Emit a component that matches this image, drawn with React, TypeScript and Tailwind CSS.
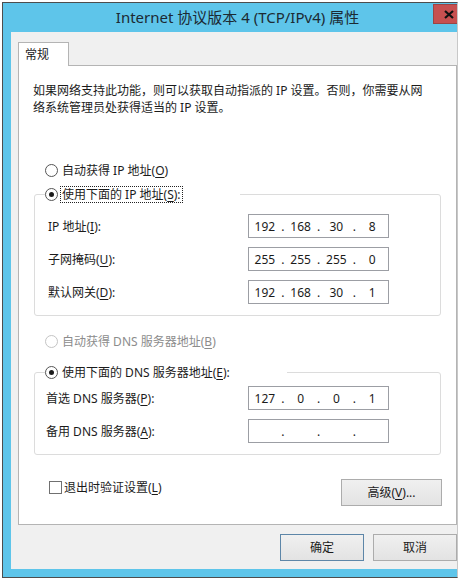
import type { ReactNode } from 'react'

const FONT = "font-['Noto_Sans','Noto_Sans_CJK_SC',sans-serif]"

function Key({ k }: { k: string }) {
  return <span className="underline underline-offset-[2px]">{k}</span>
}

function Radio({ checked, disabled }: { checked?: boolean; disabled?: boolean }) {
  return (
    <span
      className={`flex h-[13px] w-[13px] shrink-0 items-center justify-center rounded-full border bg-white ${
        disabled ? 'border-[#c4c4c4]' : 'border-[#555]'
      }`}
    >
      {checked && <span className="h-[5px] w-[5px] rounded-full bg-[#1b1b1b]" />}
    </span>
  )
}

function RadioRow({
  children,
  checked,
  disabled,
  focused,
}: {
  children: ReactNode
  checked?: boolean
  disabled?: boolean
  focused?: boolean
}) {
  return (
    <div className={`flex h-[17px] items-center gap-[2px] ${disabled ? 'text-[#8c8c8c]' : ''}`}>
      <Radio checked={checked} disabled={disabled} />
      <span
        className={`px-[1px] leading-[15px] ${
          focused ? 'border border-dotted border-[#222]' : 'border border-transparent'
        }`}
      >
        {children}
      </span>
    </div>
  )
}

function IpBox({ parts }: { parts: string[] }) {
  return (
    <div className="flex h-[24px] w-[141px] items-center border border-[#9c9ea4] bg-white">
      {parts.map((p, i) => (
        <div key={i} className="contents">
          {i > 0 && <span className="w-[4px] text-center">.</span>}
          <span className="flex-1 text-center">{p}</span>
        </div>
      ))}
    </div>
  )
}

function Field({ label, parts }: { label: ReactNode; parts: string[] }) {
  return (
    <div className="flex h-[24px] items-center justify-between">
      <span>{label}</span>
      <IpBox parts={parts} />
    </div>
  )
}

function WinButton({ children, primary, w }: { children: ReactNode; primary?: boolean; w: string }) {
  return (
    <div
      className={`flex h-[27px] items-center justify-center border bg-gradient-to-b from-[#f0f0f0] to-[#e3e3e3] ${w} ${
        primary ? 'border-[#5d86a8]' : 'border-[#acacac]'
      }`}
    >
      {children}
    </div>
  )
}

export default function App() {
  return (
    <div className={`h-[582px] w-[476px] overflow-hidden bg-white pl-[2px] pt-[2px] text-[12px] leading-[17px] text-[#1b1b1b] ${FONT}`}>
      <div className="flex h-[576px] w-[456px] flex-col border border-[#4d4d4d] border-r-[#c8c8c8] bg-[#5ec5ea]">
        {/* title bar */}
        <div className="relative flex h-[29px] shrink-0 items-center justify-center pl-[15px] text-[15px] text-[#1c2a33]">
          Internet 协议版本 4 (TCP/IPv4) 属性
          <div className="absolute right-0 top-[1px] flex h-[20px] w-[24px] items-center justify-end border border-r-0 border-[#9b4545] bg-[#c75050] pr-[3px]">
            <svg width="10" height="9" viewBox="0 0 10 9">
              <path d="M1 1 L9 8 M9 1 L1 8" stroke="#111" strokeWidth="2.2" />
            </svg>
          </div>
        </div>

        {/* client area */}
        <div className="ml-[8px] flex h-[537px] shrink-0 flex-col bg-[#f0f0f0] pl-[7px] pt-[10px]">
          <div className="relative z-10 -mb-px flex h-[24px] w-[51px] items-center border border-b-0 border-[#b4b4b4] bg-white pl-[6px]">
            常规
          </div>
          <div className="flex h-[460px] flex-col border border-[#b4b4b4] bg-white">
            <p className="ml-[14px] mt-[16px] whitespace-nowrap">
              如果网络支持此功能，则可以获取自动指派的 IP 设置。否则，你需要从网
              <br />
              络系统管理员处获得适当的 IP 设置。
            </p>

            <div className="ml-[26px] mt-[46px]">
              <RadioRow>
                自动获得 IP 地址(<Key k="O" />)
              </RadioRow>
            </div>

            <fieldset className="ml-[15px] mt-[7px] w-[407px] rounded-[3px] border border-[#dcdcdc] p-0">
              <legend className="ml-[10px] w-[195px] p-0">
                <RadioRow checked focused>
                  使用下面的 IP 地址(<Key k="S" />):
                </RadioRow>
              </legend>
              <div className="flex flex-col gap-[9px] pb-[11px] pl-[13px] pr-[51px] pt-[11px]">
                <Field label={<>IP 地址(<Key k="I" />):</>} parts={['192', '168', '30', '8']} />
                <Field label={<>子网掩码(<Key k="U" />):</>} parts={['255', '255', '255', '0']} />
                <Field label={<>默认网关(<Key k="D" />):</>} parts={['192', '168', '30', '1']} />
              </div>
            </fieldset>

            <div className="ml-[26px] mt-[17px]">
              <RadioRow disabled>
                自动获得 DNS 服务器地址(<Key k="B" />)
              </RadioRow>
            </div>

            <fieldset className="ml-[15px] mt-[14px] w-[407px] rounded-[3px] border border-[#dcdcdc] p-0">
              <legend className="ml-[10px] w-[242px] p-0">
                <RadioRow checked>
                  使用下面的 DNS 服务器地址(<Key k="E" />):
                </RadioRow>
              </legend>
              <div className="flex flex-col gap-[9px] pb-[11px] pl-[11px] pr-[51px] pt-[5px]">
                <Field label={<>首选 DNS 服务器(<Key k="P" />):</>} parts={['127', '0', '0', '1']} />
                <Field label={<>备用 DNS 服务器(<Key k="A" />):</>} parts={['', '', '', '']} />
              </div>
            </fieldset>

            <div className="mt-[24px] flex items-start pr-[14px]">
              <div className="ml-[30px] mt-[2px] flex items-center gap-[2px]">
                <span className="h-[13px] w-[13px] border border-[#707070] bg-white" />
                <span className="leading-[13px]">
                  退出时验证设置(<Key k="L" />)
                </span>
              </div>
              <div className="ml-auto">
                <WinButton w="w-[101px]">
                  高级(<Key k="V" />)...
                </WinButton>
              </div>
            </div>
          </div>

          <div className="mt-[9px] flex justify-end gap-[9px]">
            <WinButton primary w="w-[84px]">
              确定
            </WinButton>
            <WinButton w="w-[84px]">取消</WinButton>
          </div>
        </div>
      </div>
    </div>
  )
}
